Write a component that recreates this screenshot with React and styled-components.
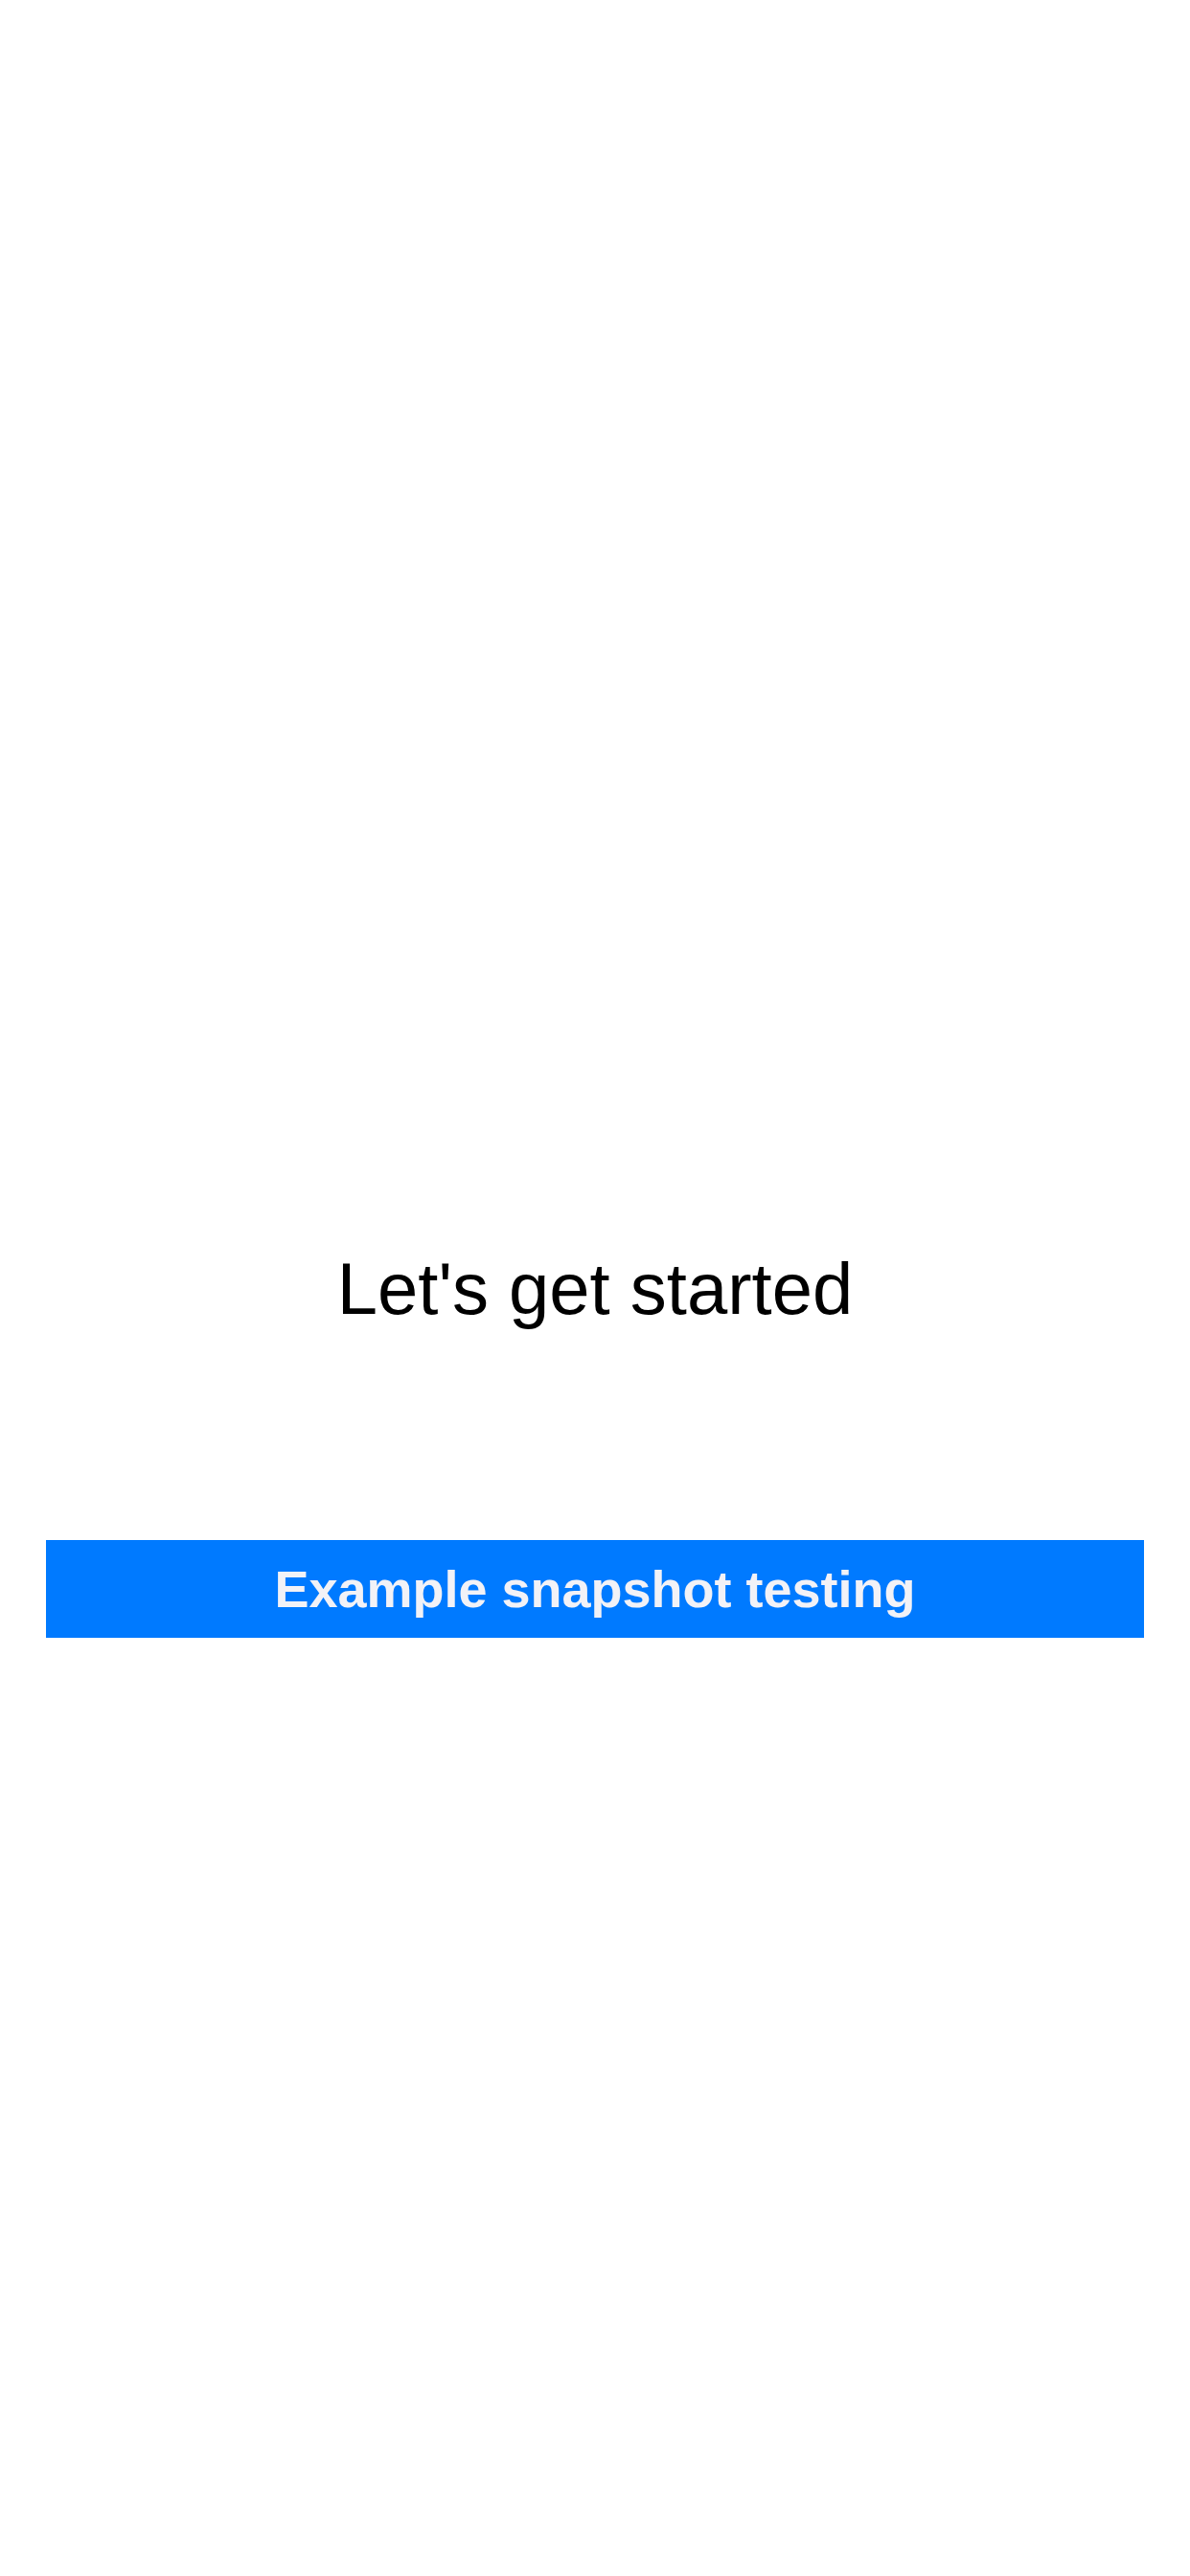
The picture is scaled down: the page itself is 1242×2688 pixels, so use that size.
import React from "react";
import styled, { createGlobalStyle } from "styled-components";

const GlobalStyle = createGlobalStyle`
  html, body {
    margin: 0;
    padding: 0;
    background: #ffffff;
  }
  * { box-sizing: border-box; }
`;

const Screen = styled.main`
  width: 1242px;
  min-height: 2688px;
  background: #ffffff;
  display: flex;
  flex-direction: column;
  align-items: stretch;
  padding: 1307px 48px 0;
  font-family: "Liberation Sans", Arial, sans-serif;
`;

const Title = styled.h1`
  margin: 0;
  font-size: 76px;
  line-height: 76px;
  font-weight: 400;
  color: #000000;
  text-align: center;
`;

const PrimaryButton = styled.button`
  margin-top: 224px;
  height: 102px;
  width: 100%;
  border: none;
  border-radius: 0;
  background: #007aff;
  color: #f2f2f7;
  font-family: "Liberation Sans", Arial, sans-serif;
  font-size: 54px;
  font-weight: 700;
  display: flex;
  align-items: center;
  justify-content: center;
  padding: 0;
  cursor: pointer;
`;

export default function App() {
  return (
    <>
      <GlobalStyle />
      <Screen>
        <Title>Let's get started</Title>
        <PrimaryButton>Example snapshot testing</PrimaryButton>
      </Screen>
    </>
  );
}
